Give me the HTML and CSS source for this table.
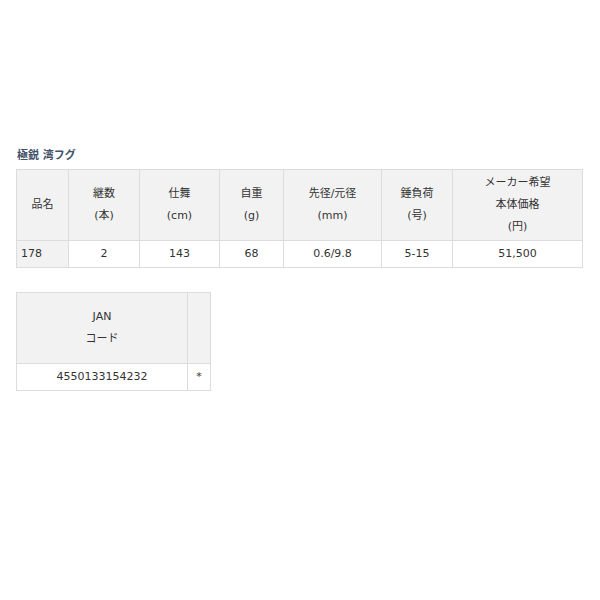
FILE: index.html
```html
<!DOCTYPE html>
<html lang="ja">
<head>
    <meta charset="UTF-8">
    <title>極鋭 湾フグ</title>
    <link rel="stylesheet" href="styles.css">
</head>
<body>
    <div class="spec">
        <h2 class="spec-title">極鋭 湾フグ</h2>
        <table class="spec-table main-table">
            <colgroup>
                <col class="c-name">
                <col class="c-joint">
                <col class="c-len">
                <col class="c-weight">
                <col class="c-dia">
                <col class="c-sinker">
                <col class="c-price">
            </colgroup>
            <tr>
                <th>品名</th>
                <th>継数<br>(本)</th>
                <th>仕舞<br>(cm)</th>
                <th>自重<br>(g)</th>
                <th>先径/元径<br>(mm)</th>
                <th>錘負荷<br>(号)</th>
                <th>メーカー希望<br>本体価格<br>(円)</th>
            </tr>
            <tr>
                <td class="name">178</td>
                <td>2</td>
                <td>143</td>
                <td>68</td>
                <td>0.6/9.8</td>
                <td>5-15</td>
                <td>51,500</td>
            </tr>
        </table>

        <table class="spec-table jan-table">
            <colgroup>
                <col class="c-jan">
                <col class="c-mark">
            </colgroup>
            <tr>
                <th class="tall">JAN<br>コード</th>
                <th class="tall"></th>
            </tr>
            <tr>
                <td>4550133154232</td>
                <td>*</td>
            </tr>
        </table>
    </div>
</body>
</html>
```

FILE: styles.css
```css
body {
    margin: 0;
    background: #fff;
    color: #333;
    font-family: 'DejaVu Sans', 'Noto Sans CJK JP', sans-serif;
    font-size: 11px;
}
.spec {
    padding: 145px 0 0 16px;
}
.spec-title {
    margin: 0 0 2px 1px;
    font-size: 11px;
    line-height: 22px;
    font-weight: bold;
    color: #425069;
}
.spec-table {
    border-collapse: collapse;
    table-layout: fixed;
}
.spec-table th, .spec-table td {
    border: 1px solid #dcdcdc;
    padding: 2px;
    line-height: 22px;
    text-align: center;
    font-weight: normal;
    vertical-align: middle;
}
.spec-table th {
    background: #f2f2f2;
}
.spec-table td.name {
    text-align: left;
    padding-left: 4px;
    background: #f2f2f2;
}
.main-table {
    width: 566px;
}
.c-name { width: 52px; }
.c-joint { width: 71px; }
.c-len { width: 80px; }
.c-weight { width: 64px; }
.c-dia { width: 98px; }
.c-sinker { width: 71px; }
.c-price { width: 130px; }
.jan-table {
    width: 194px;
    margin-top: 24px;
}
.c-jan { width: 171px; }
.c-mark { width: 23px; }
.spec-table th.tall {
    padding: 13px 2px;
}
```
